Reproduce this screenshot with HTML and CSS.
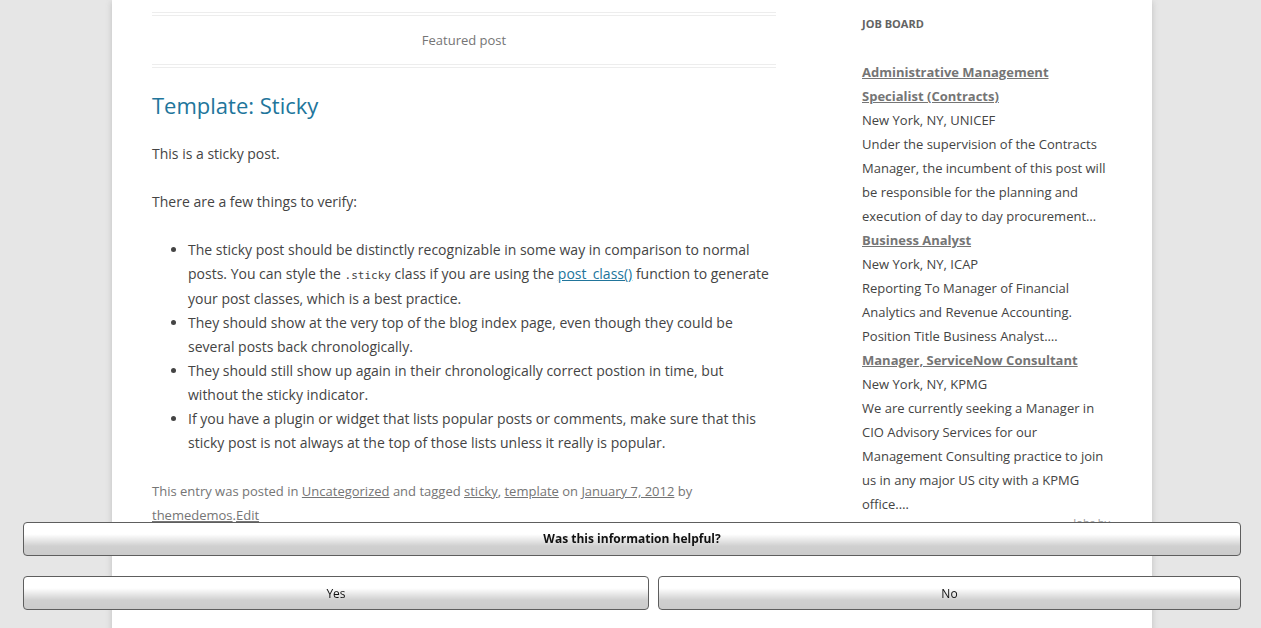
FILE: index.html
```html
<!DOCTYPE html>
<html lang="en">
<head>
<meta charset="utf-8">
<title>Template: Sticky</title>
<link rel="stylesheet" href="styles.css">
</head>
<body>
<div class="site">
  <main class="content">
    <article class="post">
      <div class="featured-post">Featured post</div>
      <h1 class="entry-title"><a href="#">Template: Sticky</a></h1>
      <div class="entry-content">
        <p>This is a sticky post.</p>
        <p>There are a few things to verify:</p>
        <ul>
          <li>The sticky post should be distinctly recognizable in some way in comparison to normal posts. You can style the <code>.sticky</code> class if you are using the <a href="#">post_class()</a> function to generate your post classes, which is a best practice.</li>
          <li>They should show at the very top of the blog index page, even though they could be several posts back chronologically.</li>
          <li>They should still show up again in their chronologically correct postion in time, but without the sticky indicator.</li>
          <li>If you have a plugin or widget that lists popular posts or comments, make sure that this sticky post is not always at the top of those lists unless it really is popular.</li>
        </ul>
      </div>
      <footer class="entry-meta">This entry was posted in <a href="#">Uncategorized</a> and tagged <a href="#">sticky</a>, <a href="#">template</a> on <a href="#">January 7, 2012</a> by <a href="#">themedemos</a>.<a href="#">Edit</a></footer>
    </article>
  </main>
  <aside class="sidebar">
    <h3 class="widget-title">Job Board</h3>
    <div class="jobs">
      <a class="job-title" href="#">Administrative Management Specialist (Contracts)</a>
      <div>New York, NY, UNICEF</div>
      <div>Under the supervision of the Contracts Manager, the incumbent of this post will be responsible for the planning and execution of day to day procurement…</div>
      <a class="job-title" href="#">Business Analyst</a>
      <div>New York, NY, ICAP</div>
      <div>Reporting To Manager of Financial Analytics and Revenue Accounting. Position Title Business Analyst.…</div>
      <a class="job-title" href="#">Manager, ServiceNow Consultant</a>
      <div>New York, NY, KPMG</div>
      <div>We are currently seeking a Manager in CIO Advisory Services for our Management Consulting practice to join us in any major US city with a KPMG office.…</div>
      <div class="jobs-by">Jobs by</div>
    </div>
  </aside>
</div>
<div class="feedback">
  <div class="question">Was this information helpful?</div>
  <div class="answers">
    <button class="answer">Yes</button>
    <button class="answer">No</button>
  </div>
</div>
</body>
</html>
```

FILE: styles.css
```css
html, body {
  margin: 0;
  padding: 0;
  background: #e6e6e6;
  height: 100%;
  overflow: hidden;
}
body {
  font-family: "Open Sans", "Liberation Sans", sans-serif;
  font-size: 14px;
  line-height: 24px;
  color: #444;
  padding-left: 3px;
  font-stretch: 94%;
}
.site {
  width: 960px;
  min-height: 100%;
  margin: 0 auto;
  padding: 12px 40px 0;
  background: #fff;
  box-shadow: 0 2px 6px rgba(100, 100, 100, 0.3);
  display: flex;
  justify-content: space-between;
  align-items: flex-start;
  box-sizing: content-box;
}
.content {
  width: 624px;
}
.featured-post {
  border-top: 4px double #ededed;
  border-bottom: 4px double #ededed;
  color: #757575;
  font-size: 13px;
  line-height: 48px;
  text-align: center;
  margin-bottom: 24px;
}
.entry-title {
  margin: 0 0 24px;
  font-size: 22px;
  line-height: 26px;
  font-weight: normal;
}
.entry-title a {
  color: #21759b;
  text-decoration: none;
}
.entry-content p {
  margin: 0 0 24px;
}
.entry-content ul {
  margin: 0 0 24px;
  padding-left: 36px;
  list-style: disc outside;
}
.entry-content a {
  color: #21759b;
}
code {
  font-family: "DejaVu Sans Mono", "Liberation Mono", monospace;
  font-size: 11px;
  line-height: 22px;
}
.entry-meta {
  font-size: 13px;
  line-height: 24px;
  color: #757575;
}
.entry-meta a {
  color: #757575;
}
.sidebar {
  width: 250px;
}
.widget-title {
  margin: 0 0 24px;
  font-size: 11px;
  line-height: 24px;
  font-weight: bold;
  text-transform: uppercase;
  color: #636363;
}
.jobs {
  width: 248px;
  font-size: 13px;
  line-height: 24px;
}
.job-title {
  display: block;
  font-weight: bold;
  color: #757575;
}
.jobs-by {
  text-align: right;
  font-size: 11px;
  line-height: 14px;
  color: #999;
}
.feedback {
  position: fixed;
  left: 23px;
  right: 20px;
  bottom: 18px;
  display: flex;
  flex-direction: column;
  gap: 20px;
}
.question,
.answer {
  height: 34px;
  box-sizing: border-box;
  border: 1px solid #5e5e5e;
  border-radius: 4px;
  background: linear-gradient(#fff 0%, #fff 35%, #d0d0d0 72%, #cbcbcb 100%);
  font-family: "Open Sans", "Liberation Sans", sans-serif;
  font-size: 12px;
  color: #111;
  display: flex;
  align-items: center;
  justify-content: center;
  padding: 0;
  font-stretch: 94%;
}
.question {
  font-weight: bold;
}
.answers {
  display: grid;
  grid-template-columns: 626px 1fr;
  gap: 9px;
}
```
